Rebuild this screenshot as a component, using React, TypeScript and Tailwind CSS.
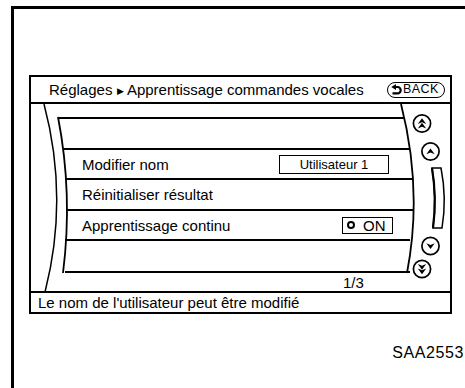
import React from "react";

function Chevron({ cx, cy, dir, double }: { cx: number; cy: number; dir: "up" | "down"; double?: boolean }) {
  const s = dir === "up" ? 1 : -1;
  const head = (oy: number) =>
    `M${cx - 4.2},${cy + s * (oy + 2.8)} L${cx},${cy + s * (oy - 3)} L${cx + 4.2},${cy + s * (oy + 2.8)} L${cx},${cy + s * (oy + 1)} Z`;
  return (
    <g>
      <circle cx={cx} cy={cy} r={8.6} fill="white" stroke="black" strokeWidth={1.7} />
      {double ? (
        <>
          <path d={head(-2.3)} fill="black" />
          <path d={head(2.3)} fill="black" />
        </>
      ) : (
        <path d={head(0)} fill="black" />
      )}
    </g>
  );
}

function BackIcon() {
  return (
    <svg width="11" height="12" viewBox="0 0 11 12">
      <path d="M4 3 H6.5 A3.2 3.2 0 0 1 6.5 9.4 H1.5" fill="none" stroke="black" strokeWidth="2.2" />
      <path d="M0.3 3 L5 0 L5 6 Z" fill="black" />
    </svg>
  );
}

export default function App() {
  const font = { fontFamily: '"Liberation Sans", Arial, sans-serif' };
  return (
    <div className="w-[465px] h-[388px] bg-white pl-[11px] pt-[6px] overflow-hidden text-black" style={font}>
      <div className="h-full border-l-[3px] border-t-[3px] border-black flex flex-col pl-[15px] pt-[66px]">
        <div className="w-[423px] h-[239px] border-2 border-black flex flex-col">
          {/* header */}
          <div className="h-[27px] border-b-2 border-black flex items-center justify-between pl-[18px] pr-[5px]">
            <div className="text-[15px] leading-none whitespace-nowrap">
              Réglages <span className="text-[9px] relative -top-[1px]">▶</span> Apprentissage commandes vocales
            </div>
            <div className="w-[58px] h-[16px] border-[1.5px] border-black rounded-full flex items-center pl-[3px] gap-[1px]">
              <BackIcon />
              <span className="text-[12.5px] leading-none tracking-[0.4px]">BACK</span>
            </div>
          </div>
          {/* middle */}
          <div className="h-[187px] relative">
            <svg className="absolute inset-0" width="419" height="187" viewBox="0 0 419 187">
              <path d="M13,0 Q38,94 14,188" fill="none" stroke="black" strokeWidth="1.5" />
              <path d="M27,13 Q42,90 32,169" fill="none" stroke="black" strokeWidth="1.8" />
              <path d="M370,0 Q392,86 376,169" fill="none" stroke="black" strokeWidth="1.8" />
              <Chevron cx={391} cy={19.5} dir="up" double />
              <Chevron cx={399.5} cy={47.5} dir="up" />
              <path
                d="M401,64 L410,64 Q416,94 411,124 L402,124 Q406,94 401,64 Z"
                fill="white"
                stroke="black"
                strokeWidth="1.5"
              />
              <path d="M401,64 Q406,94 402,124" fill="none" stroke="black" strokeWidth="2.2" />
              <Chevron cx={399.5} cy={142} dir="down" />
              <Chevron cx={391} cy={165} dir="down" double />
            </svg>
            <div className="relative flex flex-col pt-[13px]">
              <div className="h-[31px] ml-[27px] w-[346px] border-t-2 border-black" />
              <div className="h-[30px] ml-[33px] w-[346px] border-t-2 border-black flex items-center justify-between pl-[18px] pr-[21px]">
                <span className="text-[15px] leading-none">Modifier nom</span>
                <div className="w-[110px] h-[19px] border-[1.5px] border-black flex items-center justify-center text-[13px] leading-none">
                  Utilisateur 1
                </div>
              </div>
              <div className="h-[31px] ml-[35px] w-[347px] border-t-2 border-black flex items-center pl-[16px]">
                <span className="text-[15px] leading-none">Réinitialiser résultat</span>
              </div>
              <div className="h-[30px] ml-[36px] w-[347px] border-t-2 border-black flex items-center justify-between pl-[15px] pr-[21px]">
                <span className="text-[15px] leading-none">Apprentissage continu</span>
                <div className="w-[51px] h-[17px] border-[1.5px] border-black flex items-center pl-[4px] gap-[8px]">
                  <span className="w-[8px] h-[8px] rounded-full border-2 border-black" />
                  <span className="text-[15px] leading-none">ON</span>
                </div>
              </div>
              <div className="h-[34px] ml-[34px] w-[345px] border-t-2 border-b-2 border-black" />
              <div className="h-[18px] pl-[312px] flex items-center text-[15px] leading-none">1/3</div>
            </div>
          </div>
          {/* status */}
          <div className="flex-1 border-t-2 border-black flex items-center pl-[7px]">
            <span className="text-[15px] leading-none whitespace-nowrap">Le nom de l'utilisateur peut être modifié</span>
          </div>
        </div>
        <div className="mt-[31px] flex justify-end pr-[1px]">
          <span className="text-[16px] leading-none tracking-[0.6px]">SAA2553</span>
        </div>
      </div>
    </div>
  );
}
